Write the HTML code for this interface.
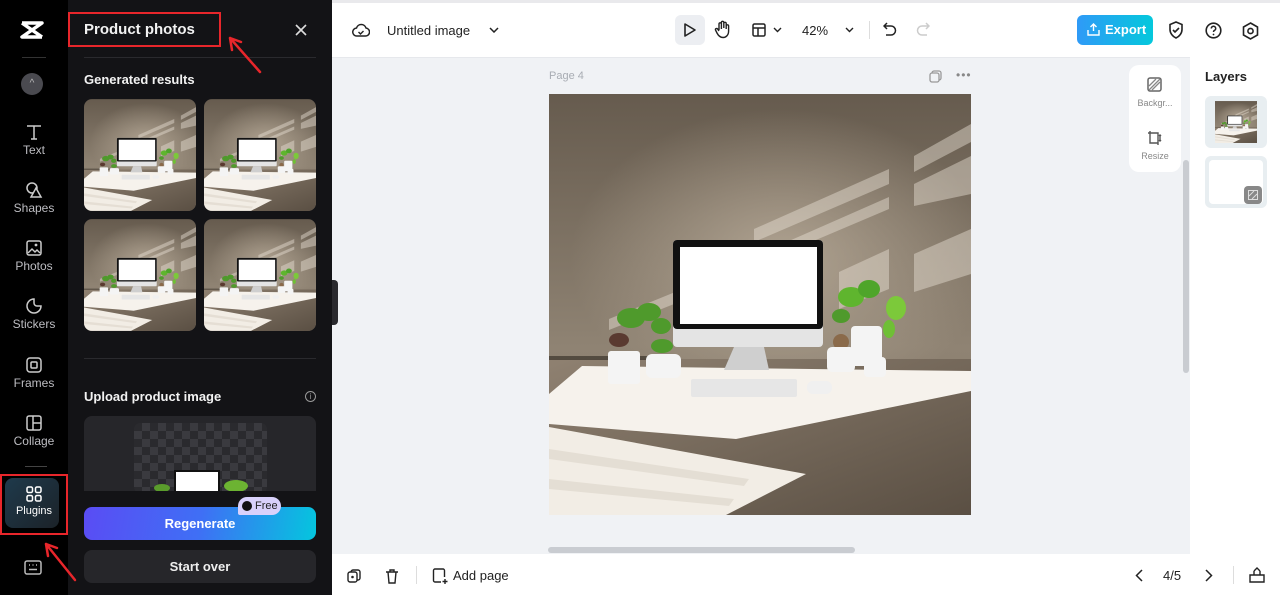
<!DOCTYPE html>
<html><head><meta charset="utf-8">
<style>
*{box-sizing:border-box;margin:0;padding:0}
body{width:1280px;height:595px;overflow:hidden;position:relative;font-family:"Liberation Sans",sans-serif;background:#f0f2f5}
.abs{position:absolute}
.rail{left:0;top:0;width:68px;height:595px;background:#000}
.ri{position:absolute;left:0;width:68px;text-align:center;color:#bdbdc2;font-size:12px}
.ri svg{display:block;margin:0 auto 2px}
.panel{left:68px;top:0;width:264px;height:595px;background:#131316}
.h{color:#f2f2f2;font-weight:bold}
.thumb{position:absolute;width:112px;height:112px;border-radius:8px;overflow:hidden}
.top{left:332px;top:3px;width:948px;height:54px;background:#fff}
.bottom{left:332px;top:554px;width:948px;height:41px;background:#fff}
</style></head><body>
<svg width="0" height="0" style="position:absolute">
<defs>
<linearGradient id="wall" x1="0" y1="0" x2="0" y2="1"><stop offset="0" stop-color="#665b4e"/><stop offset="0.6" stop-color="#8f8373"/><stop offset="1" stop-color="#85776a"/></linearGradient>
<radialGradient id="glow" cx="0.55" cy="0.55" r="0.5"><stop offset="0" stop-color="#b8ab99" stop-opacity=".85"/><stop offset="1" stop-color="#b8ab99" stop-opacity="0"/></radialGradient>
<linearGradient id="flr" x1="0" y1="0" x2="1" y2="1"><stop offset="0" stop-color="#8f8171"/><stop offset="1" stop-color="#5a4f43"/></linearGradient>
<symbol id="scene" viewBox="0 0 422 421">
<rect width="422" height="421" fill="url(#wall)"/>
<rect width="422" height="300" fill="url(#glow)"/>
<rect y="265" width="422" height="156" fill="url(#flr)"/>
<rect y="262" width="130" height="4" fill="#3a332b" opacity=".7"/>
<g fill="#e9e1d5" opacity=".45">
<polygon points="205,135 340,75 340,90 205,148"/>
<polygon points="215,158 340,103 340,115 215,168"/>
<polygon points="365,62 422,30 422,48 365,78"/>
<polygon points="365,90 422,62 422,100 365,112"/>
<polygon points="365,160 422,135 422,180 365,198"/>
<polygon points="290,178 340,155 340,195 290,215"/>
<polygon points="60,225 200,168 200,180 60,236"/>
</g>
<polygon points="0,300 33,272 422,277 422,297 187,345 0,330" fill="#f6f2ec"/>
<polygon points="0,333 257,380 177,421 0,421" fill="#f2ede5"/>
<g fill="#d8d0c4" opacity=".5"><polygon points="0,355 200,385 195,392 0,365"/><polygon points="0,385 185,405 180,412 0,395"/></g>
<rect x="124" y="146" width="150" height="107" rx="4" fill="#e4e4e4"/>
<rect x="124" y="146" width="150" height="89" rx="4" fill="#111"/>
<rect x="131" y="153" width="137" height="77" fill="#fff"/>
<polygon points="185,253 215,253 220,276 175,276" fill="#cfcfcf"/>
<rect x="142" y="285" width="106" height="18" rx="2" fill="#e6e6e6"/>
<rect x="258" y="287" width="25" height="13" rx="6" fill="#f0f0f0"/>
<g fill="#4f9a2c"><ellipse cx="82" cy="224" rx="14" ry="10"/><ellipse cx="100" cy="218" rx="12" ry="9"/><ellipse cx="112" cy="232" rx="10" ry="8"/><ellipse cx="70" cy="246" rx="10" ry="7" fill="#5a3a30"/><ellipse cx="113" cy="252" rx="11" ry="7"/><ellipse cx="302" cy="203" rx="13" ry="10" fill="#5fb52e"/><ellipse cx="320" cy="195" rx="11" ry="9" fill="#4ea52a"/><ellipse cx="347" cy="214" rx="10" ry="12" fill="#7cc93a"/><ellipse cx="292" cy="222" rx="9" ry="7"/><ellipse cx="340" cy="235" rx="6" ry="9" fill="#6fbf35"/></g>
<circle cx="292" cy="248" r="8" fill="#8a6a4a"/>
<rect x="322" y="245" width="7" height="20" rx="3" fill="#4f7a3a"/>
<g fill="#f4f4f4"><rect x="59" y="257" width="32" height="33" rx="3"/><rect x="97" y="260" width="35" height="24" rx="6"/><rect x="278" y="253" width="28" height="25" rx="5"/><rect x="302" y="232" width="31" height="40" rx="4"/><rect x="315" y="263" width="22" height="20" rx="4"/></g>
</symbol>
</defs></svg>

<div class="abs" style="left:0;top:0;width:1280px;height:3px;background:#e9e9ec"></div>
<div class="abs rail">
 <svg class="abs" style="left:19px;top:20px" width="26" height="20" viewBox="0 0 26 20"><path d="M3 3h20L3 17h20M3 3l20 14" stroke="#fff" stroke-width="3.5" fill="none" stroke-linejoin="round"/></svg>
 <div class="abs" style="left:22px;top:57px;width:24px;height:1px;background:#333"></div>
 <div class="abs" style="left:21px;top:73px;width:22px;height:22px;border-radius:50%;background:#4a4a50;color:#bbb;font-size:10px;text-align:center;line-height:22px">^</div>
 <div class="ri" style="top:123px"><svg width="18" height="18" viewBox="0 0 18 18"><path d="M2 3h14M9 3v13M6 16h6" stroke="#ccc" stroke-width="1.5" fill="none"/></svg>Text</div>
 <div class="ri" style="top:181px"><svg width="18" height="18" viewBox="0 0 18 18"><circle cx="7" cy="7" r="5" stroke="#ccc" stroke-width="1.5" fill="none"/><path d="M11 7l5 9H6z" stroke="#ccc" stroke-width="1.5" fill="#000"/></svg>Shapes</div>
 <div class="ri" style="top:239px"><svg width="18" height="18" viewBox="0 0 18 18"><rect x="2" y="2" width="14" height="14" rx="2" stroke="#ccc" stroke-width="1.5" fill="none"/><path d="M3 14l4-4 3 3 2-2 3 3" stroke="#ccc" stroke-width="1.4" fill="none"/><circle cx="11" cy="6" r="1.4" fill="#ccc"/></svg>Photos</div>
 <div class="ri" style="top:297px"><svg width="18" height="18" viewBox="0 0 18 18"><path d="M9 2a7 7 0 1 0 7 7h-4a3 3 0 0 1-3-3z" stroke="#ccc" stroke-width="1.5" fill="none"/></svg>Stickers</div>
 <div class="ri" style="top:356px"><svg width="18" height="18" viewBox="0 0 18 18"><rect x="2" y="2" width="14" height="14" rx="3" stroke="#ccc" stroke-width="1.5" fill="none"/><rect x="6" y="6" width="6" height="6" rx="1" stroke="#ccc" stroke-width="1.5" fill="none"/></svg>Frames</div>
 <div class="ri" style="top:414px"><svg width="18" height="18" viewBox="0 0 18 18"><rect x="2" y="2" width="14" height="14" rx="2" stroke="#ccc" stroke-width="1.5" fill="none"/><path d="M8 2v14M8 9h8" stroke="#ccc" stroke-width="1.5"/></svg>Collage</div>
 <div class="abs" style="left:25px;top:466px;width:22px;height:1px;background:#444"></div>
 <div class="abs" style="left:5px;top:478px;width:54px;height:50px;border-radius:8px;background:linear-gradient(135deg,#1f3a4c,#1b2228)"></div>
 <div class="ri" style="top:485px;color:#fff;font-size:11px"><svg width="18" height="18" viewBox="0 0 18 18"><g stroke="#fff" stroke-width="1.5" fill="none"><rect x="2" y="2" width="5.5" height="5.5" rx="1.5"/><rect x="10.5" y="2" width="5.5" height="5.5" rx="1.5"/><rect x="2" y="10.5" width="5.5" height="5.5" rx="1.5"/><rect x="10.5" y="10.5" width="5.5" height="5.5" rx="1.5"/></g></svg>Plugins</div>
 <div class="abs" style="left:0;top:474px;width:68px;height:61px;border:2px solid #e8262b"></div>
 <svg class="abs" style="left:24px;top:560px" width="18" height="15" viewBox="0 0 18 15"><rect x="1" y="1" width="16" height="13" rx="2" stroke="#bbb" stroke-width="1.5" fill="none"/><path d="M5 5h1M8.5 5h1M12 5h1M5 9.5h8" stroke="#bbb" stroke-width="1.5"/></svg>
</div>
<div class="abs panel">
 <div class="abs h" style="left:16px;top:21px;font-size:15px">Product photos</div>
 <div class="abs" style="left:0;top:12px;width:153px;height:35px;border:2px solid #e8262b"></div>
 <svg class="abs" style="left:227px;top:24px" width="12" height="12" viewBox="0 0 12 12"><path d="M1 1l10 10M11 1L1 11" stroke="#ddd" stroke-width="1.6"/></svg>
 <div class="abs" style="left:16px;top:57px;width:232px;height:1px;background:#2a2a2e"></div>
 <div class="abs h" style="left:16px;top:72px;font-size:13px">Generated results</div>
 <div class="thumb" style="left:16px;top:99px"><svg width="112" height="112"><use href="#scene"/></svg></div>
 <div class="thumb" style="left:136px;top:99px"><svg width="112" height="112"><use href="#scene"/></svg></div>
 <div class="thumb" style="left:16px;top:219px"><svg width="112" height="112"><use href="#scene"/></svg></div>
 <div class="thumb" style="left:136px;top:219px"><svg width="112" height="112"><use href="#scene"/></svg></div>
 <div class="abs" style="left:16px;top:358px;width:232px;height:1px;background:#2a2a2e"></div>
 <div class="abs h" style="left:16px;top:389px;font-size:13px">Upload product image</div>
 <div class="abs" style="left:237px;top:391px;width:11px;height:11px;border:1.3px solid #999;border-radius:50%;color:#999;font-size:8px;text-align:center;line-height:9px">i</div>
 <div class="abs" style="left:16px;top:416px;width:232px;height:75px;background:#26262a;border-radius:8px 8px 0 0;overflow:hidden">
  <div class="abs" style="left:50px;top:7px;width:133px;height:70px;border-radius:6px;background-color:#2a2a2e;background-image:linear-gradient(45deg,#3a3a3f 25%,transparent 25%,transparent 75%,#3a3a3f 75%),linear-gradient(45deg,#3a3a3f 25%,transparent 25%,transparent 75%,#3a3a3f 75%);background-size:16px 16px;background-position:0 0,8px 8px"></div>
  <div class="abs" style="left:90px;top:54px;width:46px;height:24px;background:#fff;border:2px solid #111"></div>
  <div class="abs" style="left:70px;top:68px;width:16px;height:8px;background:#5a9c2c;border-radius:50%"></div>
  <div class="abs" style="left:140px;top:64px;width:24px;height:12px;background:#6cb332;border-radius:50%"></div>
 </div>
 <div class="abs" style="left:16px;top:507px;width:232px;height:33px;border-radius:8px;background:linear-gradient(100deg,#5a4cf4,#3f6ff5 50%,#04c6de);color:#fff;font-weight:bold;font-size:13px;text-align:center;line-height:33px">Regenerate</div>
 <div class="abs" style="left:170px;top:497px;width:43px;height:18px;border-radius:9px 9px 9px 2px;background:#d9d1fb;color:#222;font-size:11px;line-height:18px;padding-left:17px">Free<span class="abs" style="left:4px;top:4px;width:10px;height:10px;border-radius:50%;background:#111"></span></div>
 <div class="abs" style="left:16px;top:550px;width:232px;height:33px;border-radius:8px;background:#26262a;color:#eee;font-weight:bold;font-size:13px;text-align:center;line-height:33px">Start over</div>
</div>
<div class="abs" style="left:332px;top:280px;width:6px;height:45px;background:#2a2a2e;border-radius:0 4px 4px 0"></div>
<div class="abs top">
 <svg class="abs" style="left:20px;top:19px" width="18" height="16" viewBox="0 0 18 16"><path d="M5 14a4 4 0 0 1-.5-8A5 5 0 0 1 14 6a4 4 0 0 1-1 8z" stroke="#222" stroke-width="1.5" fill="none"/><path d="M6.5 10l2 2 3-3" stroke="#222" stroke-width="1.4" fill="none"/></svg>
 <div class="abs" style="left:55px;top:20px;font-size:13px;color:#222">Untitled image</div>
 <svg class="abs" style="left:157px;top:24px" width="10" height="6"><path d="M1 1l4 4 4-4" stroke="#222" stroke-width="1.5" fill="none"/></svg>
 <div class="abs" style="left:343px;top:12px;width:30px;height:30px;border-radius:6px;background:#eceef2"></div>
 <svg class="abs" style="left:351px;top:19px" width="14" height="16" viewBox="0 0 14 16"><path d="M2 2l10 6-10 6z" stroke="#222" stroke-width="1.6" fill="none" stroke-linejoin="round"/></svg>
 <svg class="abs" style="left:382px;top:17px" width="18" height="19" viewBox="0 0 18 19"><path d="M5 10V4a1.2 1.2 0 0 1 2.4 0v5M7.4 8V2.5a1.2 1.2 0 0 1 2.4 0V8M9.8 8V3.5a1.2 1.2 0 0 1 2.4 0V9M12.2 9V6a1.2 1.2 0 0 1 2.4 0v5c0 4-2.5 6.5-5.5 6.5S4.5 16 3 13l-1.5-3a1.2 1.2 0 0 1 2-1.2L5 11" stroke="#222" stroke-width="1.4" fill="none"/></svg>
 <svg class="abs" style="left:420px;top:20px" width="14" height="14" viewBox="0 0 14 14"><rect x="1" y="1" width="12" height="12" rx="1.5" stroke="#222" stroke-width="1.5" fill="none"/><path d="M1 5h12M6 5v8" stroke="#222" stroke-width="1.5"/></svg>
 <svg class="abs" style="left:441px;top:24px" width="9" height="6"><path d="M1 1l3.5 3.5L8 1" stroke="#222" stroke-width="1.4" fill="none"/></svg>
 <div class="abs" style="left:470px;top:20px;font-size:13px;color:#222">42%</div>
 <svg class="abs" style="left:513px;top:24px" width="9" height="6"><path d="M1 1l3.5 3.5L8 1" stroke="#222" stroke-width="1.4" fill="none"/></svg>
 <div class="abs" style="left:537px;top:18px;width:1px;height:18px;background:#ddd"></div>
 <svg class="abs" style="left:551px;top:19px" width="14" height="15" viewBox="0 0 14 15"><path d="M4 1L1 4l3 3M1 4h7a4.5 4.5 0 0 1 0 9H3" stroke="#222" stroke-width="1.5" fill="none"/></svg>
 <svg class="abs" style="left:584px;top:19px" width="14" height="15" viewBox="0 0 14 15"><path d="M10 1l3 3-3 3M13 4H6a4.5 4.5 0 0 0 0 9h5" stroke="#ccc" stroke-width="1.5" fill="none"/></svg>
 <div class="abs" style="left:745px;top:12px;width:76px;height:30px;border-radius:6px;background:linear-gradient(90deg,#2f9af7,#04c8dc);color:#fff;font-weight:bold;font-size:13px;line-height:30px;padding-left:28px">Export</div>
 <svg class="abs" style="left:755px;top:20px" width="13" height="13" viewBox="0 0 13 13"><path d="M6.5 8V1M3.5 4l3-3 3 3M1 7v5h11V7" stroke="#fff" stroke-width="1.4" fill="none"/></svg>
 <svg class="abs" style="left:836px;top:18px" width="16" height="18" viewBox="0 0 16 18"><path d="M8 1l6 2.5v5C14 12 11.5 15.5 8 17 4.5 15.5 2 12 2 8.5v-5z" stroke="#222" stroke-width="1.6" fill="none"/><path d="M5 9l2 2 4-4" stroke="#222" stroke-width="1.6" fill="none"/></svg>
 <svg class="abs" style="left:873px;top:19px" width="17" height="17" viewBox="0 0 17 17"><circle cx="8.5" cy="8.5" r="7.3" stroke="#222" stroke-width="1.6" fill="none"/><path d="M6.3 6.5a2.2 2.2 0 1 1 3 2c-.7.3-.8.8-.8 1.5" stroke="#222" stroke-width="1.5" fill="none"/><circle cx="8.5" cy="12.5" r=".9" fill="#222"/></svg>
 <svg class="abs" style="left:910px;top:19px" width="17" height="18" viewBox="0 0 17 18"><path d="M8.5 1l7 4v8l-7 4-7-4V5z" stroke="#222" stroke-width="1.6" fill="none"/><circle cx="8.5" cy="9" r="2.6" stroke="#222" stroke-width="1.6" fill="none"/></svg>
</div>
<div class="abs" style="left:332px;top:57px;width:858px;height:1px;background:#e6e8ec"></div>
<div class="abs" style="left:549px;top:70px;font-size:11px;color:#a8acb3">Page 4</div>
<svg class="abs" style="left:929px;top:70px" width="13" height="13" viewBox="0 0 13 13"><rect x="3" y="1" width="9" height="9" rx="2" stroke="#999" stroke-width="1.3" fill="none"/><rect x="1" y="3" width="9" height="9" rx="2" stroke="#999" stroke-width="1.3" fill="#f0f2f5"/></svg>
<div class="abs" style="left:956px;top:68px;font-size:12px;color:#888;letter-spacing:1px">•••</div>
<svg class="abs" style="left:549px;top:94px" width="422" height="421"><use href="#scene"/></svg>
<div class="abs" style="left:1129px;top:65px;width:52px;height:107px;border-radius:10px;background:#fff"></div>
<svg class="abs" style="left:1147px;top:77px" width="15" height="15" viewBox="0 0 15 15"><rect x="1" y="1" width="13" height="13" rx="2" stroke="#666" stroke-width="1.5" fill="none"/><path d="M2 9l7-7M5 13l8-8M2 13L13 2" stroke="#888" stroke-width="1.3"/></svg>
<div class="abs" style="left:1129px;top:98px;width:52px;text-align:center;font-size:9px;color:#888">Backgr...</div>
<svg class="abs" style="left:1147px;top:130px" width="15" height="15" viewBox="0 0 15 15"><path d="M3 3h8v10H3zM1 3h2M3 1v2M11 13v2M13 5v6M12 6l1-1 1 1M12 10l1 1 1-1" stroke="#555" stroke-width="1.4" fill="none"/></svg>
<div class="abs" style="left:1129px;top:151px;width:52px;text-align:center;font-size:9px;color:#888">Resize</div>
<div class="abs" style="left:1183px;top:160px;width:6px;height:213px;background:#c9ccd1;border-radius:3px"></div>
<div class="abs" style="left:548px;top:547px;width:307px;height:6px;background:#c9ccd1;border-radius:3px"></div>
<div class="abs" style="left:1190px;top:57px;width:90px;height:497px;background:#fff"></div>
<div class="abs" style="left:1205px;top:69px;font-size:13px;font-weight:bold;color:#222">Layers</div>
<div class="abs" style="left:1205px;top:96px;width:62px;height:52px;border-radius:6px;background:#e8eef1"></div>
<svg class="abs" style="left:1215px;top:101px" width="42" height="42"><use href="#scene"/></svg>
<div class="abs" style="left:1205px;top:156px;width:62px;height:52px;border-radius:6px;background:#e8eef1"></div>
<div class="abs" style="left:1209px;top:160px;width:54px;height:44px;border-radius:4px;background:#fff"></div>
<div class="abs" style="left:1244px;top:186px;width:18px;height:18px;border-radius:4px;background:#888"></div>
<svg class="abs" style="left:1248px;top:190px" width="10" height="10" viewBox="0 0 10 10"><rect x=".5" y=".5" width="9" height="9" stroke="#ddd" fill="none"/><path d="M1 6l5-5M4 9l5-5" stroke="#ddd"/></svg>
<div class="abs bottom">
 <svg class="abs" style="left:15px;top:15px" width="14" height="14" viewBox="0 0 14 14"><rect x="4" y="1" width="9" height="10" rx="2" stroke="#222" stroke-width="1.4" fill="none"/><rect x="1" y="3" width="9" height="10" rx="2" stroke="#222" stroke-width="1.4" fill="#fff"/><circle cx="5.5" cy="8" r="1.3" fill="#222"/></svg>
 <svg class="abs" style="left:53px;top:14px" width="14" height="16" viewBox="0 0 14 16"><path d="M1 4h12M5 4V2h4v2M3 4l1 11h6l1-11" stroke="#222" stroke-width="1.4" fill="none"/></svg>
 <div class="abs" style="left:84px;top:12px;width:1px;height:18px;background:#ddd"></div>
 <svg class="abs" style="left:100px;top:14px" width="16" height="16" viewBox="0 0 16 16"><path d="M9 14H3a1.5 1.5 0 0 1-1.5-1.5v-10A1.5 1.5 0 0 1 3 1h8a1.5 1.5 0 0 1 1.5 1.5V9M13 11v5M10.5 13.5h5" stroke="#222" stroke-width="1.4" fill="none"/></svg>
 <div class="abs" style="left:121px;top:14px;font-size:13px;color:#222">Add page</div>
 <svg class="abs" style="left:803px;top:15px" width="8" height="13"><path d="M7 1L1.5 6.5 7 12" stroke="#222" stroke-width="1.5" fill="none"/></svg>
 <div class="abs" style="left:831px;top:14px;font-size:13px;color:#222">4/5</div>
 <svg class="abs" style="left:873px;top:15px" width="8" height="13"><path d="M1 1l5.5 5.5L1 12" stroke="#222" stroke-width="1.5" fill="none"/></svg>
 <div class="abs" style="left:901px;top:12px;width:1px;height:18px;background:#ddd"></div>
 <svg class="abs" style="left:917px;top:12px" width="16" height="18" viewBox="0 0 16 18"><path d="M1 9h14v7H1zM5 9V5M11 9V5M5 5l3-3 3 3" stroke="#222" stroke-width="1.4" fill="none"/></svg>
</div>
<svg class="abs" style="left:0;top:0" width="1280" height="595" viewBox="0 0 1280 595">
<g stroke="#e8262b" stroke-width="2.5" fill="none" stroke-linecap="round"><path d="M260 72L230 38M230 38l2 12M230 38l11 4"/><path d="M75 580L46 544M46 544l2 12M46 544l11 4"/></g>
</svg>
</body></html>
